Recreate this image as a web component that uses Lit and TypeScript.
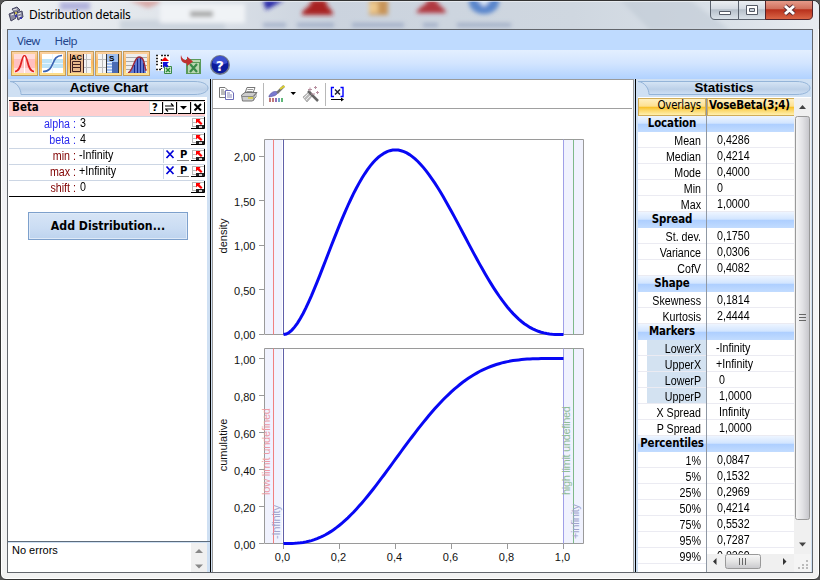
import { LitElement, html, css, svg } from "lit";
import { customElement, property } from "lit/decorators.js";
import { classMap } from "lit/directives/class-map.js";

type Row = { label: string; value?: string; kind?: "head" | "marker"; pad?: number };

const STATS: Row[] = [
  { label: "Location", kind: "head" },
  { label: "Mean", value: "0,4286" },
  { label: "Median", value: "0,4214" },
  { label: "Mode", value: "0,4000" },
  { label: "Min", value: "0" },
  { label: "Max", value: "1,0000" },
  { label: "Spread", kind: "head" },
  { label: "St. dev.", value: "0,1750" },
  { label: "Variance", value: "0,0306" },
  { label: "CofV", value: "0,4082" },
  { label: "Shape", kind: "head" },
  { label: "Skewness", value: "0,1814" },
  { label: "Kurtosis", value: "2,4444" },
  { label: "Markers", kind: "head" },
  { label: "LowerX", value: "-Infinity", kind: "marker", pad: 9 },
  { label: "UpperX", value: "+Infinity", kind: "marker", pad: 9 },
  { label: "LowerP", value: "0", kind: "marker", pad: 12 },
  { label: "UpperP", value: "1,0000", kind: "marker", pad: 12 },
  { label: "X Spread", value: "Infinity", pad: 12 },
  { label: "P Spread", value: "1,0000", pad: 12 },
  { label: "Percentiles", kind: "head" },
  { label: "1%", value: "0,0847" },
  { label: "5%", value: "0,1532" },
  { label: "25%", value: "0,2969" },
  { label: "50%", value: "0,4214" },
  { label: "75%", value: "0,5532" },
  { label: "95%", value: "0,7287" },
  { label: "99%", value: "0,8269" },
];

const PARAMS = [
  { name: "alpha :", value: "3", blue: true, limits: false },
  { name: "beta :", value: "4", blue: true, limits: false },
  { name: "min :", value: "-Infinity", blue: false, limits: true },
  { name: "max :", value: "+Infinity", blue: false, limits: true },
  { name: "shift :", value: "0", blue: false, limits: false },
];

const sharedText = css`
  .narrow {
    display: block;
    font: 12px/16px "Liberation Sans", Arial, sans-serif;
    transform: scaleX(0.89);
    transform-origin: left center;
    white-space: pre;
  }
  .narrow.right {
    transform-origin: right center;
  }
  svg {
    display: block;
  }
`;

@customElement("panel-header")
class PanelHeader extends LitElement {
  @property() label = "";
  @property({ type: Number }) span = 200;
  static styles = css`
    :host {
      display: grid;
      height: 18px;
      flex: none;
      background: #cfe0f3;
    }
    svg,
    .label {
      grid-area: 1 / 1;
    }
    .label {
      font: bold 13.4px/18px "Liberation Sans", Arial, sans-serif;
      letter-spacing: -0.05px;
      text-align: center;
      color: #000;
      z-index: 1;
    }
  `;
  render() {
    const w = this.span;
    return html`<svg width=${w} height="18" viewBox="0 0 ${w} 18">
        <defs>
          <linearGradient id="h" x1="0" y1="0" x2="0" y2="1">
            <stop offset="0" stop-color="#d6e5f5" />
            <stop offset=".6" stop-color="#bcd0e8" />
            <stop offset="1" stop-color="#cfe0f4" />
          </linearGradient>
        </defs>
        <path
          d="M2 2.500 H${w - 16} C${w - 6} 2.500 ${w - 2} 6 ${w - 2} 9 C${w - 2} 12 ${w - 6} 15.500 ${w - 16} 15.500 H13 C13 10 9 3 2 2.500Z"
          fill="url(#h)" stroke="#94b4d8" stroke-width="1" />
      </svg>
      <div class="label">${this.label}</div>`;
  }
}

@customElement("param-panel")
class ParamPanel extends LitElement {
  static styles = [
    sharedText,
    css`
      :host {
        display: flex;
        flex-direction: column;
        flex: none;
        width: 203px;
        background: #fff;
        border-right: 1px solid #000;
        box-sizing: border-box;
        box-shadow: inset -3px 0 #cfe0f3;
      }
      .table {
        margin: 3px 5px 0 1px;
        border-top: 1px solid #000;
        border-bottom: 1px solid #000;
      }
      .name {
        display: flex;
        height: 15px;
        background: #ffcfcf;
      }
      .name b {
        flex: 1;
        padding-left: 3px;
        font: bold 11.5px/13px "DejaVu Sans Condensed", "DejaVu Sans", sans-serif;
      }
      .box {
        width: 13px;
        height: 12px;
        margin-right: 1px;
        background: #fff;
        box-shadow: 1px 1px #000, inset 1px 1px #ddd;
      }
      .row {
        display: grid;
        grid-template-columns: 67px 4px 1fr auto;
        height: 15px;
        border-top: 1px solid #ccd6e4;
      }
      .key {
        text-align: right;
        color: #800000;
      }
      .key .narrow {
        line-height: 15px;
      }
      .key.blue {
        color: #2a2aee;
      }
      .val .narrow {
        line-height: 13px;
      }
      .val.limit {
        margin-left: -1px;
      }
      .tools {
        display: flex;
      }
      .btn {
        margin: 15px 0 0 20px;
        width: 160px;
        height: 28px;
        box-sizing: border-box;
        border: 1px solid #7da0cc;
        background: linear-gradient(#d7e5f6, #cadcf3 60%, #bdd3ee);
        box-shadow: inset 0 0 0 1px #dfeaf8;
        font: bold 12.2px/27px "DejaVu Sans Condensed", "DejaVu Sans", sans-serif;
        text-align: center;
      }
      .errors {
        display: flex;
        justify-content: space-between;
        margin-top: auto;
        height: 29px;
        border-top: 1px solid #5d6c7c;
        box-shadow: inset 0 1px #cfe0f3;
        padding: 1px 3px 0 4px;
      }
      .errors span {
        font: 11px/15px "Liberation Sans", Arial, sans-serif;
      }
      .errors svg {
        background: #f0f0f0;
      }
    `,
  ];

  private boxes = [
    svg`<text x="3" y="10" font-family="DejaVu Sans" font-weight="bold" font-size="10">?</text>`,
    svg`<path d="M2 5H11M8 2.5L10 4.5M2 8H11M5 10.500L3 8.500" stroke="#000" stroke-width="1.2" fill="none"/>`,
    svg`<path d="M3 5H10L6.500 8.500Z" fill="#000"/>`,
    svg`<path d="M3.500 3L10 9.500M10 3L3.500 9.500" stroke="#000" stroke-width="2"/>`,
  ];

  private pick() {
    return html`<svg width="14" height="14" viewBox="0 0 14 14">
      <path d="M1.500 1V10M1 1.500H13M1 5.500H5M1 9.500H5" stroke="#bbb" fill="none" />
      <path d="M0 11.500H13.500V0" stroke="#000" stroke-width="1" fill="none" />
      <path d="M5 8H13V11H5Z" fill="#222" /><path d="M8 9H11V11H8Z" fill="#ccc" />
      <path d="M5 2H9.500L8.500 3.500L11.500 6.500L10 8L6.500 5L5 6.500Z" fill="#f00" />
    </svg>`;
  }

  render() {
    return html`<panel-header label="Active Chart" span="202"></panel-header>
      <div class="table">
        <div class="name">
          <b>Beta</b>
          ${this.boxes.map((b) => html`<svg class="box" viewBox="0 0 13 12">${b}</svg>`)}
        </div>
        ${PARAMS.map(
          (p) => html`<div class="row">
            <div class=${classMap({ key: true, blue: p.blue })}><span class="narrow right">${p.name}</span></div>
            <i></i>
            <div class=${classMap({ val: true, limit: p.limits })}><span class="narrow">${p.value}</span></div>
            <div class="tools">
              ${p.limits
                ? html`<svg width="28" height="14" viewBox="0 0 28 14">
                    <path d="M.5 0V14" stroke="#ccd6e4" />
                    <path d="M3.500 1.500L10.500 9M10.500 1.500L3.500 9" stroke="#0000d8" stroke-width="1.700" fill="none" />
                    <text x="17" y="9" font-family="DejaVu Sans" font-weight="bold" font-size="10">P</text>
                    <path d="M14 11.500H26" stroke="#888" />
                  </svg>`
                : ""}
              ${this.pick()}
            </div>
          </div>`,
        )}
      </div>
      <div class="btn">Add Distribution...</div>
      <div class="errors">
        <span>No errors</span>
        <svg width="16" height="29" viewBox="0 0 16 29">
          <path d="M4 10H12L8 6Z" fill="#888" /><path d="M4 21.500H12L8 25.500Z" fill="#888" />
        </svg>
      </div>`;
  }
}

@customElement("chart-pane")
class ChartPane extends LitElement {
  static styles = css`
    :host {
      display: flex;
      flex-direction: column;
      flex: none;
      width: 422px;
      margin: 0 1px;
      background: #fff;
      border: 1px solid #9a9a9a;
      border-bottom: 0;
      box-sizing: border-box;
    }
    svg {
      display: block;
      flex: none;
    }
    .bar {
      border-bottom: 1px solid #a0a0a0;
    }
    text {
      font-family: "Liberation Sans", Arial, sans-serif;
      font-size: 11px;
    }
  `;

  private x = (v: number) => 283.5 + 280 * v;

  private line(f: (v: number) => number) {
    return Array.from({ length: 101 }, (_, i) => `${this.x(i / 100).toFixed(1)},${f(i / 100).toFixed(1)}`).join(" ");
  }

  private frame(top: number) {
    const b = top + 195;
    return svg`
      <path d="M264.500 ${top}H282V${b}H264.500ZM564 ${top}H583.500V${b}H564Z" fill="#f0f2fe"/>
      <path d="M264.500 ${top}H583.500V${b}H264.500Z" fill="none" stroke="#9a9a9a"/>
      <path d="M273.500 ${top}V${b}" stroke="#f08080"/>
      <path d="M573.500 ${top}V${b}" stroke="#7fb98a"/>
      <path d="M283.500 ${top}V${b}" stroke="#6060a8"/>
      <path d="M563.500 ${top}V${b}" stroke="#a0a0e8"/>`;
  }

  render() {
    const pdf = (v: number) => 334.5 - 89 * 60 * v * v * (1 - v) ** 3;
    const cdf = (v: number) =>
      543.5 - 185 * (20 * v ** 3 * (1 - v) ** 3 + 15 * v ** 4 * (1 - v) ** 2 + 6 * v ** 5 * (1 - v) + v ** 6);
    return html`
      <svg class="bar" width="419" height="28" viewBox="213 80 419 28">
        <g fill="#fff" stroke="#777">
          <path d="M219.500 87.500H225L227.500 90V97.500H219.500Z" />
          <path d="M221 90H224M221 92H226M221 94H226" />
          <path d="M225.500 90.500H231L233.500 93V99.500H225.500Z" stroke="#6a6ab8" />
          <path d="M227 93H230M227 95H232M227 97H232" stroke="#8888b8" />
        </g>
        <path d="M245 93L247 87.500H255L253 93" fill="#fff" stroke="#777" />
        <path d="M247.500 89.500H253M246.500 91.500H252.500" stroke="#999" />
        <path d="M241.500 95L245 92.500H257L254 96V100L252 101H242.500Z" fill="#ccc" stroke="#777" />
        <path d="M242 96.500H253L256 93V97L253 100" fill="none" stroke="#888" />
        <path d="M248 98H253" stroke="#d6d05a" stroke-width="2" />
        <path d="M263.500 83V106M325.500 83V106" stroke="#b8b8b8" />
        <path d="M269 96C272 91 275 91 278 92C277 96 273 96 269 97Z" fill="#7a7ad0" stroke="#5555a0" stroke-width=".7" />
        <path d="M277 93L284 86" stroke="#777" stroke-width="2.500" /><path d="M280 89L284.500 86" stroke="#ddd030" stroke-width="2" />
        <path d="M270 98V102M273 98V102" stroke="#c07878" stroke-width="2" />
        <path d="M276 98V102" stroke="#9570b8" stroke-width="2" />
        <path d="M279 98V102" stroke="#70a8c8" stroke-width="2" />
        <path d="M282 98V102" stroke="#60b878" stroke-width="2" />
        <path d="M290.500 92H296L293.250 95Z" fill="#000" />
        <path d="M303 97L310 91L313 95L307 102Z" fill="#bbb" stroke="#999" stroke-width=".7" />
        <path d="M304 98L309 93M306 100L311 95" stroke="#eee" />
        <path d="M308 91L318 101" stroke="#666" stroke-width="2.500" />
        <path d="M308 89.500H312M310 87.500V91.500M314 87.500H317M315.500 86V89M316 92.500H319M317.500 91V94M311 94H315" stroke="#b890a0" />
        <path d="M334 87.500H331.500V96.500H334M340.500 87.500H343V96.500H340.500" stroke="#00f" stroke-width="1.400" fill="none" />
        <path d="M335 89.500L340 94.500M340 89.500L335 94.500" stroke="#223" stroke-width="1.500" />
        <path d="M331 99.500H343" stroke="#000" /><path d="M341 97.500L344 99.500L341 101.500Z" fill="#000" />
      </svg>
      <svg width="420" height="463" viewBox="213 109 420 463">
        ${this.frame(139.5)} ${this.frame(348.5)}
        <g stroke="#9a9a9a">
          ${[156.5, 200.5, 245.5, 289.5, 334.5, 358.5, 395.5, 432.5, 469.5, 506.5, 543.5].map(
            (y) => svg`<path d="M259 ${y}H264"/>`,
          )}
          ${[283.5, 339.5, 395.5, 451.5, 507.5, 563.5].map((x) => svg`<path d="M${x} 544V549"/>`)}
        </g>
        <g text-anchor="end" fill="#111">
          ${["2,00", "1,50", "1,00", "0,50", "0,00"].map((t, i) => svg`<text x="255.500" y=${161 + i * 44.5}>${t}</text>`)}
          ${["1,00", "0,80", "0,60", "0,40", "0,20", "0,00"].map(
            (t, i) => svg`<text x="255.500" y=${363.5 + i * 37}>${t}</text>`,
          )}
        </g>
        <g text-anchor="middle" fill="#111">
          ${["0,0", "0,2", "0,4", "0,6", "0,8", "1,0"].map((t, i) => svg`<text x=${282.5 + i * 56} y="561">${t}</text>`)}
          <text transform="translate(227 236) rotate(-90)">density</text>
          <text transform="translate(227 445) rotate(-90)">cumulative</text>
        </g>
        <text transform="translate(270 495) rotate(-90)" textLength="87" fill="#ee9aa4">low limit undefined</text>
        <text transform="translate(570 495) rotate(-90)" textLength="89" fill="#8fbc98">high limit undefined</text>
        <text transform="translate(280 539) rotate(-90)" textLength="34" fill="#a0a4cc">-Infinity</text>
        <text transform="translate(579 539) rotate(-90)" textLength="35" fill="#a0a4cc">+infinity</text>
        <polyline points=${this.line(pdf)} fill="none" stroke="#0808f4" stroke-width="3" />
        <polyline points=${this.line(cdf)} fill="none" stroke="#0808f4" stroke-width="3" />
      </svg>
    `;
  }
}

@customElement("stats-panel")
class StatsPanel extends LitElement {
  static styles = [
    sharedText,
    css`
      :host {
        display: flex;
        flex-direction: column;
        flex: none;
        width: 177px;
        box-sizing: border-box;
        background: #fff;
        border-left: 1px solid #000;
        box-shadow: inset 2px 0 #cfe0f3, inset -1px 0 #cfe0f3;
      }
      .body {
        display: grid;
        grid-template-columns: 69px 87px 17px;
        grid-template-rows: 456px 18px;
        margin-top: 1px;
        padding-left: 2px;
        flex: none;
        height: 474px;
      }
      .labels {
        grid-row: 1 / 3;
        border-right: 1px solid #8f98a4;
        overflow: hidden;
      }
      .values {
        overflow: hidden;
      }
      .top {
        height: 18px;
        box-sizing: border-box;
        border: 1px solid #d0ac58;
        background: linear-gradient(#fff0c0, #fde091 45%, #f8c128 52%, #fbd667 70%, #fff0b0);
        font: 11.4px/13px "DejaVu Sans Condensed", "DejaVu Sans", sans-serif;
        letter-spacing: -0.2px;
        text-align: right;
        padding-right: 4px;
        white-space: nowrap;
      }
      .values .top {
        font-weight: bold;
        font-size: 11.5px;
        letter-spacing: -0.12px;
        padding: 0 0 0 1px;
        text-align: left;
        border-right: 0;
      }
      .cell {
        height: 16px;
        box-sizing: border-box;
        border-bottom: 1px solid #ebebf2;
        overflow: hidden;
      }
      .labels .cell {
        text-align: right;
        padding-right: 5px;
      }
      .labels .cell .narrow {
        line-height: 18px;
      }
      .cell.head {
        border: 0;
        padding: 0 !important;
        background: linear-gradient(#eef5ff, #d2e5ff 45%, #aecfff 52%, #c2dcff);
        font: bold 11.4px/15px "DejaVu Sans Condensed", "DejaVu Sans", sans-serif;
        letter-spacing: -0.1px;
        text-align: center !important;
      }
      .labels .cell.marker {
        background: linear-gradient(#d3e2f1, #d3e2f1) 9px 0 / 100% 100% no-repeat;
      }
      .vbar {
        grid-column: 3;
        background: #f0f0f0;
      }
      .hbar {
        grid-column: 2;
      }
    `,
  ];

  render() {
    return html`<panel-header label="Statistics" span="176"></panel-header>
      <div class="body">
        <div class="labels">
          <div class="top">Overlays</div>
          ${STATS.map(
            (r) =>
              html`<div class=${classMap({ cell: true, head: r.kind === "head", marker: r.kind === "marker" })}>
                ${r.kind === "head" ? r.label : html`<span class="narrow right">${r.label}</span>`}
              </div>`,
          )}
        </div>
        <div class="values">
          <div class="top">VoseBeta(3;4)</div>
          ${STATS.map(
            (r) =>
              html`<div class=${classMap({ cell: true, head: r.kind === "head" })} style="padding-left:${r.pad ?? 10}px">
                <span class="narrow">${r.value ?? ""}</span>
              </div>`,
          )}
        </div>
        <svg class="vbar" width="17" height="456" viewBox="0 0 17 456">
          <defs>
            <linearGradient id="t"><stop stop-color="#f7f7f7" /><stop offset=".5" stop-color="#e2e2e5" /><stop offset="1" stop-color="#c5c5ca" /></linearGradient>
          </defs>
          <path d="M5 11H12L8.500 7Z" fill="#444" />
          <rect x="1.500" y="18.500" width="14" height="403" rx="2" fill="url(#t)" stroke="#999" />
          <path d="M5 216.500H12M5 219.500H12M5 222.500H12" stroke="#666" />
          <path d="M5 444.500H12L8.500 448.500Z" fill="#444" />
        </svg>
        <svg class="hbar" width="87" height="18" viewBox="0 0 87 18">
          <defs>
            <linearGradient id="u" x1="0" y1="0" x2="0" y2="1"><stop stop-color="#f8f8f8" /><stop offset=".5" stop-color="#e4e4e4" /><stop offset="1" stop-color="#c8c8cc" /></linearGradient>
          </defs>
          <rect width="87" height="18" fill="#f0f0f0" />
          <path d="M9.500 4V11L6 7.500ZM76 4V11L79.500 7.500Z" fill="#333" />
          <rect x="18.500" y=".5" width="35" height="14" rx="2" fill="url(#u)" stroke="#999" />
          <path d="M32.500 4V11M35.500 4V11M38.500 4V11" stroke="#666" />
        </svg>
        <svg width="17" height="18" viewBox="0 0 17 18">
          <rect width="17" height="18" fill="#f4f4f4" />
          <path d="M12 6H14V8H12ZM12 10H14V12H12ZM8 10H10V12H8ZM12 13H14V15H12ZM8 13H10V15H8ZM4 13H6V15H4Z" fill="#bbb" />
        </svg>
      </div>`;
  }
}

@customElement("app-root")
class AppRoot extends LitElement {
  static styles = css`
    :host {
      display: block;
      width: 820px;
      height: 580px;
      background: #555;
      overflow: hidden;
    }
    svg {
      display: block;
    }
    .window {
      display: grid;
      grid-template-rows: 28px 544px;
      width: 820px;
      height: 580px;
      box-sizing: border-box;
      border: 1px solid #333;
      border-radius: 7px 7px 6px 6px;
      background: linear-gradient(#e4e9ee 0, #eceef1 60px, #f5f5f6 300px, #f2f2f2);
      box-shadow: inset 0 0 0 1px #fff;
      overflow: hidden;
      padding: 0 7px;
    }
    .title {
      display: grid;
      margin: 0 -7px;
    }
    .title > * {
      grid-area: 1 / 1;
    }
    .caption {
      z-index: 1;
      display: flex;
      gap: 5px;
      padding: 5px 0 0 7px;
      font: 12px/18px "Noto Sans", "Open Sans", sans-serif;
      letter-spacing: -0.28px;
      color: #000;
    }
    .client {
      display: flex;
      flex-direction: column;
      border: 1px solid #62666c;
      box-sizing: border-box;
      margin: 0 -1px 0 -1px;
      width: 806px;
      background: #fff;
    }
    .menu {
      height: 20px;
      flex: none;
      display: flex;
      gap: 15px;
      padding-left: 9px;
      background: #bfdbff;
      color: #24468c;
      font: 11.5px/22px "Noto Sans", "Open Sans", sans-serif;
      letter-spacing: -0.65px;
    }
    .tools {
      height: 29px;
      flex: none;
      display: flex;
      gap: 1px;
      padding: 1px 0 0 3px;
      box-sizing: border-box;
      background: linear-gradient(#e3efff, #d3e5ff 45%, #b1d2ff);
    }
    .tool {
      width: 27px;
      height: 25px;
      box-sizing: border-box;
      border: 1px solid #c39b5c;
      background: linear-gradient(#fbd2a4, #fcb862 45%, #fdc871 70%, #fde391);
      padding: 2px;
    }
    .extra {
      margin-left: 4px;
    }
    .main {
      display: flex;
      height: 493px;
      background: #cfe0f3;
    }
  `;

  private icons = [
    svg`<path d="M0 0H21V19H0Z" fill="#ffdcdc"/><path d="M0 5H21V14H0Z" fill="#ffc0c0"/><path d="M10.500 0V19" stroke="#fff" /><path d="M1 17.500C8 17.500 7 1.500 10.500 1.500S13 17.500 20 17.500" fill="none" stroke="#e02020" stroke-width="1.700"/>`,
    svg`<path d="M0 0H21V19H0Z" fill="#fff"/><path d="M0 5H21V14H0Z" fill="#bfe4f8"/><path d="M10.500 0V19M0 9.500H21" stroke="#e8f6ff"/><path d="M1 17.500C14 17.500 8 1.500 20 1.500" fill="none" stroke="#3c64b4" stroke-width="1.700"/>`,
    svg`<path d="M0 0H21V19H0Z" fill="#f4f4f4"/><path d="M14 5.500H21M14 13.500H21M16.500 0V19" stroke="#bbb"/><path d="M0 0H13V19H0Z" fill="#e8b88c"/><text x="1" y="6" font-family="Liberation Sans" font-weight="bold" font-size="7.500" textLength="11">AC</text><path d="M2.500 7.500H10.500V10.500H2.500ZM2.500 10.500H10.500V13.500H2.500ZM2.500 13.500H10.500V17.500H2.500ZM13.500 0V19M.5 0V19" fill="none" stroke="#402020"/>`,
    svg`<path d="M0 0H21V19H0Z" fill="#f4f4f4"/><path d="M0 5.500H8M0 13.500H8M4.500 0V19" stroke="#bbb"/><path d="M8 0H20V19H8Z" fill="#9ebdee"/><path d="M14 8V19H20V8Z" fill="#4a6ab4"/><path d="M8.500 0V19M20.500 0V19" stroke="#333"/><text x="11" y="7" font-family="Liberation Sans" font-weight="bold" font-size="8">S</text><path d="M9 8.500H14M9 11.500H14M9 14.500H14M9 17.500H14" stroke="#e8f0ff"/>`,
    svg`<path d="M0 0H21V19H0Z" fill="#eee"/><path d="M0 3.500H21M0 7.500H21M0 11.500H21M0 15.500H21" stroke="#aaa"/><path d="M2 19C7 18 8 3 13 3S18 9 20 19Z" fill="#6078d0"/><path d="M8.500 11V19M11.500 5V19M14.500 4V19M17.500 9V19" stroke="#182888"/><path d="M2 19C7 18 8 3 13 3S18 9 20 17" stroke="#a02838" fill="none" stroke-width="1.400"/>`,
  ];

  render() {
    return html`<div class="window">
      <div class="title">
        <svg width="818" height="28" viewBox="1 1 818 28">
          <defs>
            <filter id="b" x="-20%" y="-50%" width="140%" height="200%"><feGaussianBlur stdDeviation="2.2" /></filter>
            <linearGradient id="g"><stop stop-color="#eff1f3" /><stop offset=".22" stop-color="#dfe4ea" /><stop offset=".4" stop-color="#cbd3de" /><stop offset=".7" stop-color="#cfd7e0" /><stop offset=".9" stop-color="#dbe2e9" /><stop offset="1" stop-color="#e8ecf0" /></linearGradient>
            <linearGradient id="r" x1="0" y1="0" x2="0" y2="1"><stop stop-color="#e8a090" /><stop offset=".45" stop-color="#d0705c" /><stop offset=".5" stop-color="#b8301c" /><stop offset="1" stop-color="#dc6848" /></linearGradient>
            <linearGradient id="n" x1="0" y1="0" x2="0" y2="1"><stop stop-color="#eef1f4" /><stop offset=".45" stop-color="#d3dae2" /><stop offset=".5" stop-color="#b6c0ca" /><stop offset="1" stop-color="#dce3ea" /></linearGradient>
          </defs>
          <path d="M0 0H820V30H0Z" fill="url(#g)" />
          <g filter="url(#b)">
            <path d="M60 2H90V10H60Z" fill="#8c8cd0" opacity=".6" />
            <path d="M128 0H160V3L148 8Z" fill="#d08078" opacity=".6" />
            <path d="M120 20H225V30H120Z" fill="#bcc6d4" opacity=".6" />
            <path d="M160 4H245V23H160Z" fill="#f0f3f6" />
            <path d="M190 11H213V17H190Z" fill="#888" opacity=".7" />
            <path d="M263 0H284L266 10Z" fill="#2828a8" />
            <path d="M302 15C302 8 309 10 312 0H326C326 8 333 9 333 15Z" fill="#a82424" />
            <path d="M369 0H388V15H369Z" fill="#c89458" /><path d="M369 2H378V13H369Z" fill="#edc88c" />
            <path d="M416 13C420 5 426 6 428 0H436C438 6 446 8 446 13Z" fill="#b03840" />
            <ellipse cx="484" cy="2" rx="15" ry="12" fill="#5a86cc" /><path d="M476 -2H492L484 7Z" fill="#dce8f8" />
            <path d="M263 23H286V27H263ZM297 23H334V27H297ZM352 23H404V27H352ZM423 23H438V27H423ZM457 23H511V27H457Z" fill="#8494b8" opacity=".6" />
            <path d="M620 0H690L730 30H650Z" fill="#bcc6d2" opacity=".5" />
          </g>
          <path d="M7 1.500H813" stroke="#fff" opacity=".5" />
          <path d="M710.500 0V15Q710.500 19.500 715 19.500H738.500V0Z" fill="url(#n)" stroke="#59616c" />
          <path d="M738.500 0V19.500H765.500V0Z" fill="url(#n)" stroke="#59616c" />
          <path d="M765.500 0V19.500H808Q812.500 19.500 812.500 15V0Z" fill="url(#r)" stroke="#54242a" />
          <path d="M719.500 11.500H730.500V14.500H719.500Z" fill="#fff" stroke="#555b66" />
          <path d="M746.500 5.500H757.500V14.500H746.500Z" fill="#fff" stroke="#555b66" /><path d="M749.500 8.500H754.500V11.500H749.500Z" fill="#ccd4dd" stroke="#555b66" />
          <path d="M785 6L794 14M794 6L785 14" stroke="#5a3038" stroke-width="5" /><path d="M785 6L794 14M794 6L785 14" stroke="#fff" stroke-width="3" />
        </svg>
        <div class="caption">
          <svg width="16" height="17" viewBox="0 0 16 17">
            <path d="M1 8L6 6L8 12L3 15ZM4 3L9 1L12 4L7 7ZM8 7L14 5L15 11L10 14Z" fill="#8a8aa0" stroke="#444460" stroke-width="1" />
            <path d="M5 4L9 3M10 8L13 7M3 9L6 8M10 11L13 10" stroke="#eee" />
            <path d="M7 9H9V11H7ZM12 11H14V13H12Z" fill="#3838b0" /><path d="M7 6H9V8H7Z" fill="#c8b850" />
          </svg>
          <span>Distribution details</span>
        </div>
      </div>
      <div class="client">
        <div class="menu"><span>View</span><span>Help</span></div>
        <div class="tools">
          ${this.icons.map((i) => html`<div class="tool"><svg width="21" height="19" viewBox="0 0 21 19">${i}</svg></div>`)}
          <svg class="extra" width="78" height="25" viewBox="155 51 78 25">
            <path d="M156 55H170V71H156Z" fill="#fff" />
            <path d="M156 55.500H159M161 55.500H170M156 58.500H159M156 61.500H159M156 64.500H159M161.500 59V69M156 69.500H162" stroke="#222" stroke-width="1.400" stroke-dasharray="2 1" />
            <path d="M161 61L165 57L169 61Z" fill="#e00" />
            <path d="M164.500 66.500H171.500V73.500H164.500Z" fill="#cfe8cf" stroke="#3a8a4a" /><path d="M166 68L170 72M170 68L166 72" stroke="#2a8a3a" stroke-width="1.500" />
            <path d="M163 62H169L167 64L168.500 66L167 67.500L165 66L163 68Z" fill="#11d" />
            <path d="M186 59H201V74H186Z" fill="#5a9a5a" /><path d="M187 60H200V62H187Z" fill="#b8d8b0" /><path d="M188 63H199V73H188Z" fill="#b9d6b0" />
            <path d="M190 64L197 72M197 64L190 72" stroke="#3a8a48" stroke-width="2.200" />
            <path d="M181 55C182 59 184 60 187 60V56.500L193 61.500L187 66V63.500C182 63 180 60 181 55Z" fill="#c03030" />
            <circle cx="220" cy="65" r="10" fill="#707888" /><circle cx="220" cy="65" r="8.500" fill="#0c1c9c" />
            <path d="M212.500 63A7.500 7 0 0 1 227.500 63Q220 66 212.500 63Z" fill="#3c50d0" />
            <text x="215.800" y="70.500" font-family="DejaVu Sans" font-weight="bold" font-size="14" fill="#fff">?</text>
          </svg>
        </div>
        <div class="main">
          <param-panel></param-panel>
          <chart-pane></chart-pane>
          <stats-panel></stats-panel>
        </div>
      </div>
    </div>`;
  }
}
